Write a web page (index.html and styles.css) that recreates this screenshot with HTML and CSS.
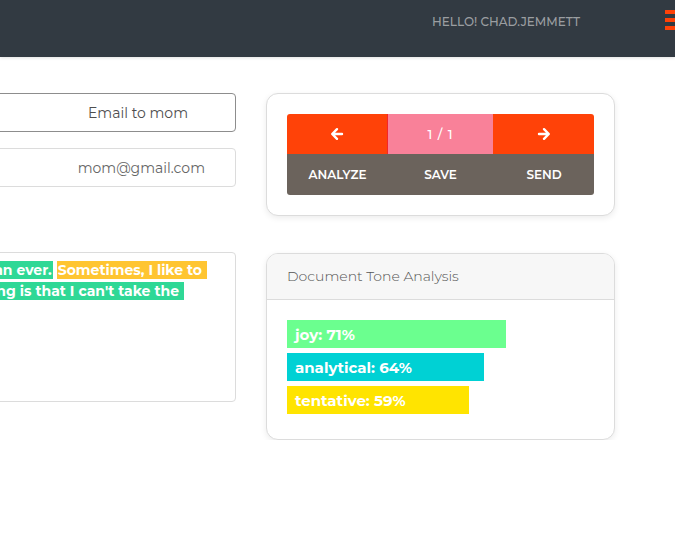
FILE: index.html
```html
<!DOCTYPE html>
<html>
<head>
<meta charset="utf-8">
<link rel="stylesheet" href="styles.css">
</head>
<body>
<header class="nav">
  <span class="hello">HELLO! CHAD.JEMMETT</span>
  <span class="burger"><i></i><i></i><i></i></span>
</header>
<main class="page">
  <section class="left">
    <div class="field field-focus"><span class="val val-subject">Email to mom</span></div>
    <div class="field"><span class="val val-to">mom@gmail.com</span></div>
    <div class="editor">
      <div class="line line-1"><span class="hl green">an ever.</span><span class="hl yellow">Sometimes, I like to&nbsp;</span></div>
      <div class="line line-2"><span class="hl green">ng is that I can't take the&nbsp;</span></div>
    </div>
  </section>
  <section class="right">
    <div class="card card-actions">
      <div class="btns">
        <div class="row-top">
          <button class="nav-btn prev" aria-label="previous">
            <svg width="14" height="14" viewBox="0 0 14 14"><path d="M12 7H2.5M7 2.2L2.2 7 7 11.8" fill="none" stroke="#fff" stroke-width="2.4" stroke-linecap="round" stroke-linejoin="round"/></svg>
          </button>
          <div class="pager">1 / 1</div>
          <button class="nav-btn next" aria-label="next">
            <svg width="14" height="14" viewBox="0 0 14 14"><path d="M2 7h9.5M7 2.2L11.8 7 7 11.8" fill="none" stroke="#fff" stroke-width="2.4" stroke-linecap="round" stroke-linejoin="round"/></svg>
          </button>
        </div>
        <div class="row-bottom">
          <button class="act">ANALYZE</button>
          <button class="act">SAVE</button>
          <button class="act">SEND</button>
        </div>
      </div>
    </div>
    <div class="card card-tone">
      <div class="tone-head">Document Tone Analysis</div>
      <div class="tone-body">
        <div class="bar joy" style="width:219px">joy: 71%</div>
        <div class="bar analytical" style="width:197px">analytical: 64%</div>
        <div class="bar tentative" style="width:182px">tentative: 59%</div>
      </div>
    </div>
  </section>
</main>
</body>
</html>
```
FILE: styles.css
```css
html, body {
  margin: 0;
  padding: 0;
  overflow: hidden;
  background: #fff;
  font-family: "Montserrat", "Open Sans", "DejaVu Sans", sans-serif;
}
.nav {
  height: 57px;
  background: #323a42;
  display: flex;
  align-items: center;
  justify-content: flex-end;
  box-shadow: 0 1px 3px rgba(0,0,0,0.12);
  position: relative;
}
.hello {
  color: #9b9ea1;
  font-size: 12px;
  font-weight: 500;
  margin-right: 85px;
  margin-top: -15px;
  letter-spacing: 0;
}
.burger {
  display: flex;
  flex-direction: column;
  gap: 4px;
  width: 10px;
  margin-top: -17px;
}
.burger i {
  display: block;
  height: 4px;
  background: #ff4208;
}
.page {
  display: grid;
  grid-template-columns: 500px 349px;
  column-gap: 30px;
  justify-content: end;
  padding-right: 60px;
  padding-top: 36px;
}
.left {
  display: flex;
  flex-direction: column;
}
.field {
  height: 37px;
  border: 1px solid #dcdcdc;
  border-radius: 4px;
  display: flex;
  align-items: center;
  justify-content: flex-end;
  margin-bottom: 16px;
  font-size: 14px;
  color: #555;
}
.field-focus {
  border-color: #8d8d8d;
  color: #4e4e4e;
}
.val-subject { margin-right: 47px; }
.val-to { margin-right: 30px; color: #666; }
.editor {
  margin-top: 49px;
  height: 140px;
  border: 1px solid #dcdcdc;
  border-radius: 4px;
  display: flex;
  flex-direction: column;
  padding-top: 8px;
  overflow: hidden;
}
.line {
  display: flex;
  justify-content: flex-end;
  white-space: nowrap;
  height: 21px;
  font-size: 14px;
  font-weight: 700;
  color: #fff;
}
.line-1 { margin-right: 28px; gap: 4px; }
.line-2 { margin-right: 51px; }
.hl {
  line-height: 18px;
  height: 18px;
  padding: 0 1px;
}
.green { background: #2fd896; }
.yellow { background: #ffc531; }
.right {
  display: flex;
  flex-direction: column;
  gap: 37px;
}
.card {
  border: 1px solid #dcdcdc;
  border-radius: 12px;
  box-shadow: 0 2px 6px rgba(0,0,0,0.08);
  background: #fff;
  overflow: hidden;
}
.card-actions {
  padding: 20px;
}
.btns {
  border-radius: 3px;
  overflow: hidden;
}
.row-top, .row-bottom {
  display: grid;
  grid-template-columns: 101px 105px 102px;
}
.row-top { height: 40px; }
.row-bottom { height: 41px; background: #6b635c; }
button {
  border: 0;
  margin: 0;
  padding: 0;
  font-family: inherit;
  cursor: pointer;
}
.nav-btn {
  background: #ff4208;
  display: flex;
  align-items: center;
  justify-content: center;
}
.prev { border-right: 1px solid #f3262a; }
.pager {
  background: #f98199;
  color: #fff;
  font-size: 13px;
  font-weight: 500;
  display: flex;
  align-items: center;
  justify-content: center;
  letter-spacing: 1px;
}
.act {
  background: transparent;
  color: #fff;
  font-size: 12px;
  font-weight: 600;
  display: flex;
  align-items: center;
  justify-content: center;
}
.tone-head {
  height: 46px;
  background: #f7f7f7;
  border-bottom: 1px solid #dcdcdc;
  display: flex;
  align-items: center;
  padding-left: 20px;
  padding-bottom: 2px;
  box-sizing: border-box;
  font-size: 14px;
  color: #555;
  font-weight: 300;
}
.tone-body {
  padding: 20px 20px 25px;
  display: flex;
  flex-direction: column;
  gap: 5px;
}
.bar {
  height: 28px;
  display: flex;
  align-items: center;
  padding-left: 8px;
  box-sizing: border-box;
  color: #fff;
  font-weight: 700;
  font-size: 15px;
}
.joy { background: #6bff8f; }
.analytical { background: #00d1d4; }
.tentative { background: #ffe400; }
```
